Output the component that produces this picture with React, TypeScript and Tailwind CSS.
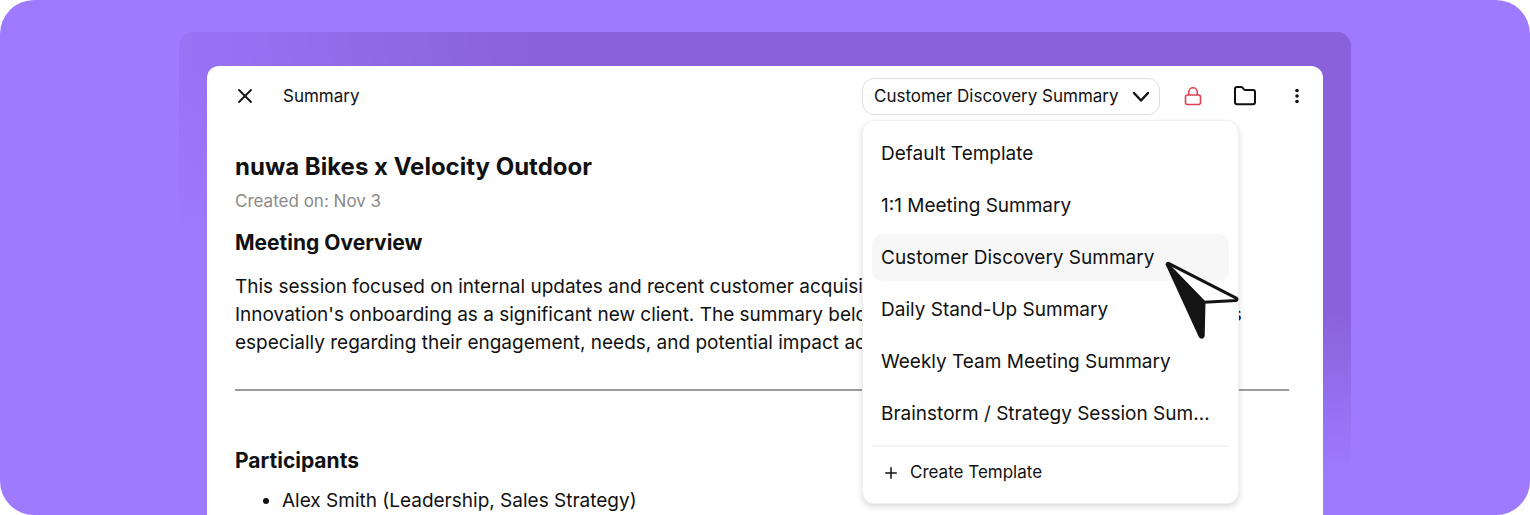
import React, { useState } from 'react';
import { Plus, X } from 'lucide-react';

const templates = [
  'Default Template',
  '1:1 Meeting Summary',
  'Customer Discovery Summary',
  'Daily Stand-Up Summary',
  'Weekly Team Meeting Summary',
  'Brainstorm / Strategy Session Sum…',
];

const LockIcon = () => (
  <svg width="18" height="20" viewBox="0 0 18 20" fill="none" stroke="#e0404f" strokeWidth="1.6">
    <rect x="1.5" y="9" width="15" height="9.5" rx="2" />
    <path d="M4.75 9V6a4.25 4.25 0 0 1 8.5 0v3" />
  </svg>
);

const FolderIcon = () => (
  <svg width="22" height="20" viewBox="0 0 22 20" fill="none" stroke="#111" strokeWidth="2" strokeLinejoin="round">
    <path d="M1 16.2V3a2 2 0 0 1 2-2h4a2 2 0 0 1 1.5.7L9.9 3.3a2 2 0 0 0 1.5.7H19a2 2 0 0 1 2 2v10.2a2 2 0 0 1-2 2H3a2 2 0 0 1-2-2z" />
  </svg>
);

const DotsIcon = () => (
  <svg width="18" height="18" viewBox="0 0 18 18" fill="#111">
    <circle cx="9" cy="3.5" r="1.8" />
    <circle cx="9" cy="9" r="1.8" />
    <circle cx="9" cy="14.5" r="1.8" />
  </svg>
);

const Pointer = () => (
  <svg
    className="pointer-events-none absolute top-[139px] left-[300px]"
    width="78"
    height="82"
    viewBox="0 0 78 82"
    strokeLinejoin="round"
    stroke="#141414"
    strokeWidth="3"
  >
    <path d="M4.2 4.4Q4.6 2.9 6 3.6L73.3 38.2Q75 39.8 73 40.5L41 42.2z" fill="#fff" />
    <path d="M4.2 4.4L41 42.2 40.2 76Q38.8 78.4 37.2 76.4z" fill="#141414" />
  </svg>
);

const App: React.FC = () => {
  const [selected, setSelected] = useState('Customer Discovery Summary');
  const [open, setOpen] = useState(true);

  return (
    <div className="flex h-screen overflow-hidden rounded-[34px] bg-[#9e7aff] pt-8 font-['Inter',sans-serif] text-[#111]">
      <div className="mx-auto w-full max-w-[1172px] rounded-t-[14px] bg-[radial-gradient(112%_92%_at_100%_0%,#8961da_62%,#8961da00_100%)] px-7 pt-[34px]">
        <main className="h-full rounded-t-[12px] bg-white">
          <header className="flex h-[60px] items-center pr-[17px] pl-[26px]">
            <button type="button" aria-label="Close" className="mr-[26px]">
              <X size={24} strokeWidth={1.8} />
            </button>
            <span className="pt-[2px] text-[17px]">Summary</span>

            <div className="relative mr-6 ml-auto w-[298px]">
              <select
                aria-label="Summary template"
                value={selected}
                onChange={(e) => setSelected(e.target.value)}
                onMouseDown={(e) => {
                  e.preventDefault();
                  setOpen(!open);
                }}
                className="block h-[37px] w-full appearance-none rounded-[12px] border border-[#dedede] bg-white pt-[2px] pr-10 pl-[11px] text-[17px] outline-none"
              >
                {templates.map((name) => (
                  <option key={name}>{name}</option>
                ))}
              </select>
              <svg
                className="pointer-events-none absolute top-[13px] right-[10px]"
                width="18"
                height="12"
                viewBox="0 0 18 12"
                fill="none"
                stroke="#111"
                strokeWidth="2.4"
                strokeLinecap="round"
                strokeLinejoin="round"
              >
                <path d="M2 2l7 7.5L16 2" />
              </svg>

              {open && (
                <div className="absolute top-[42px] left-0 w-[377px] rounded-[12px] border border-[#f0f0f0] bg-white px-[9px] pt-[9px] shadow-[0_3px_6px_rgba(0,0,0,0.14)]">
                  <div className="flex flex-col gap-[5px]">
                    {templates.map((name) => (
                      <button
                        key={name}
                        type="button"
                        onClick={() => setSelected(name)}
                        className={`h-[47px] rounded-[10px] pt-[2px] pl-[9px] text-left text-[19px] whitespace-nowrap ${
                          name === selected ? 'bg-[#f7f7f7]' : ''
                        }`}
                      >
                        {name}
                      </button>
                    ))}
                  </div>
                  <div className="mt-2 border-t-2 border-[#f4f4f4] pt-1 pb-2">
                    <button type="button" className="flex h-11 items-center gap-[10px] pl-[10px] text-[17px]">
                      <Plus size={18} strokeWidth={2} />
                      Create Template
                    </button>
                  </div>
                  <Pointer />
                </div>
              )}
            </div>

            <div className="flex items-center gap-8">
              <button type="button" aria-label="Lock">
                <LockIcon />
              </button>
              <button type="button" aria-label="Move to folder">
                <FolderIcon />
              </button>
              <button type="button" aria-label="More">
                <DotsIcon />
              </button>
            </div>
          </header>

          <article className="px-7 pt-[25px] text-[19px]">
            <h1 className="text-[24px] leading-8 font-bold">nuwa Bikes x Velocity Outdoor</h1>
            <p className="mt-1 text-[17px] leading-7 text-[#8a8a8a]">Created on: Nov 3</p>
            <h2 className="mt-3 text-[21px] leading-8 font-bold">Meeting Overview</h2>
            <p className="mt-[14px] leading-7 whitespace-nowrap">
              This session focused on internal updates and recent customer acquisition, with Summit
              <br />
              Innovation's onboarding as a significant new client. The summary below outlines the main details and next steps
              <br />
              especially regarding their engagement, needs, and potential impact across the business.
            </p>
            <hr className="mt-8 mr-[6px] border-t-2 border-[#9b9b9b]" />
            <h2 className="mt-[54px] text-[21px] leading-8 font-bold">Participants</h2>
            <ul className="mt-2 list-disc pl-[47px] leading-8">
              <li>Alex Smith (Leadership, Sales Strategy)</li>
            </ul>
          </article>
        </main>
      </div>
    </div>
  );
};

export default App;
